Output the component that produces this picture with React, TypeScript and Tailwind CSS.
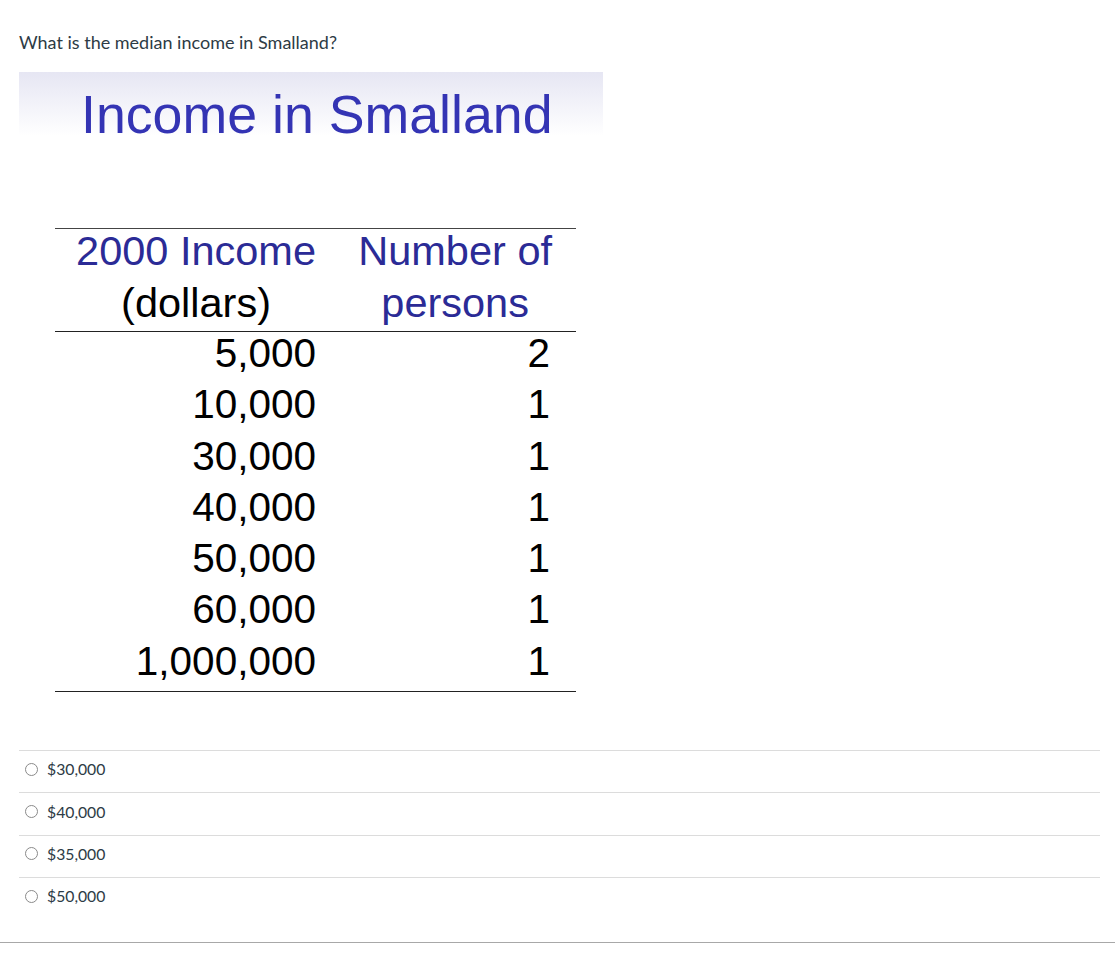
import React from "react";

const rows = [
  ["5,000", "2"],
  ["10,000", "1"],
  ["30,000", "1"],
  ["40,000", "1"],
  ["50,000", "1"],
  ["60,000", "1"],
  ["1,000,000", "1"],
];

const answers = ["$30,000", "$40,000", "$35,000", "$50,000"];

function IncomeTable() {
  return (
    <div className="ml-[19px] mt-[20px] w-[584px] bg-white font-['Liberation_Sans',Arial,sans-serif]">
      <div className="h-[64px] bg-gradient-to-b from-[#e6e6f3] to-white">
        <div className="pt-[10px] pl-[62px] text-[53.7px] leading-[64px] text-[#3434b4]">
          Income in Smalland
        </div>
      </div>
      <div className="ml-[36px] mt-[92px] w-[521px]">
        <div className="border-t-[1.5px] border-[#444] pb-[2px]">
          <div className="-mt-[4px] grid grid-cols-[261px_260px] text-[41.5px] leading-[52px] text-[#2b2b96]">
            <div className="ml-auto w-fit text-center">
              <div>2000 Income</div>
              <div className="text-black">(dollars)</div>
            </div>
            <div className="ml-auto mr-[24px] w-fit text-center">
              <div>Number of</div>
              <div>persons</div>
            </div>
          </div>
        </div>
        <div className="border-t-[1.5px] border-[#222] border-b-[1.5px] pb-[4px]">
          <div className="-mt-[4px]">
            {rows.map(([income, count]) => (
              <div key={income} className="grid grid-cols-[261px_260px] text-[40.5px] leading-[51.3px] text-black">
                <div className="text-right">{income}</div>
                <div className="pr-[26px] text-right">{count}</div>
              </div>
            ))}
          </div>
        </div>
      </div>
    </div>
  );
}

export default function App() {
  return (
    <div className="min-h-[979px] bg-white font-['Lato','Liberation_Sans',sans-serif] text-[#2d3b45]">
      <div className="pt-[32px] pl-[19px] text-[18px] leading-[20px]">What is the median income in Smalland?</div>
      <IncomeTable />
      <div className="ml-[19px] mr-[15px] mt-[58px]">
        {answers.map((a) => (
          <div key={a} className="flex h-[42.3px] items-center border-t border-[#dcdcdc] pb-[5px]">
            <span className="ml-[6px] h-[13px] w-[13px] rounded-full border border-[#8a8a8a] bg-white" />
            <span className="ml-[9px] text-[15.75px]">{a}</span>
          </div>
        ))}
      </div>
      <div className="mt-[23px] border-t border-[#a8a8a8]" />
    </div>
  );
}
